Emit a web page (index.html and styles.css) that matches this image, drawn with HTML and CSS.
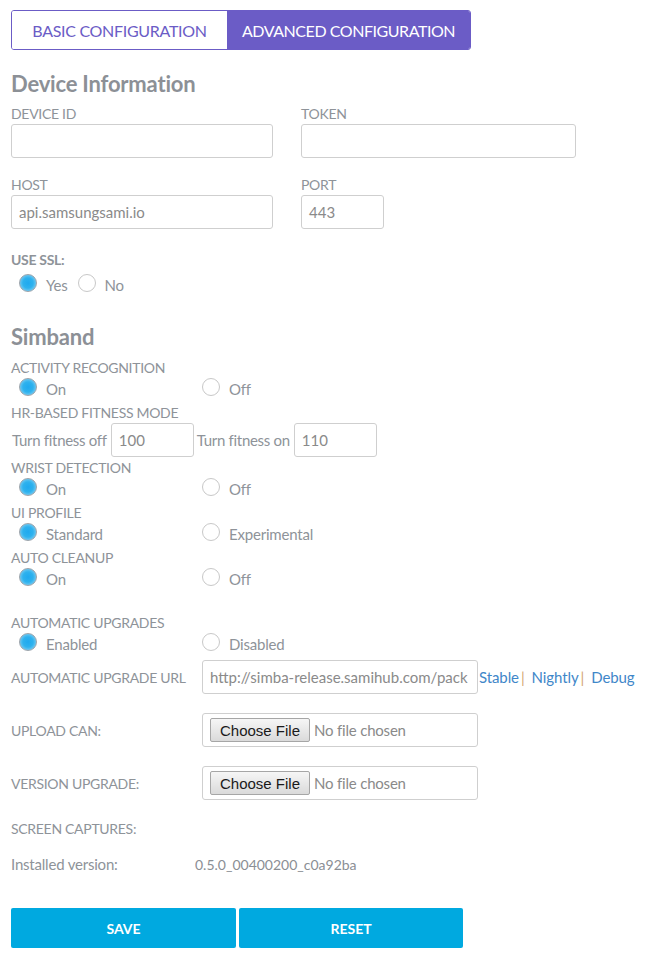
FILE: index.html
```html
<!DOCTYPE html>
<html>
<head>
<meta charset="utf-8">
<link rel="stylesheet" href="styles.css">
</head>
<body>
<div class="page">
  <div class="tabs">
    <div class="tab tab-basic">BASIC CONFIGURATION</div>
    <div class="tab tab-adv">ADVANCED CONFIGURATION</div>
  </div>

  <h2 class="section-title first">Device Information</h2>
  <div class="dev-grid">
    <div class="field">
      <div class="label">DEVICE ID</div>
      <div class="input input-wide"></div>
    </div>
    <div class="field">
      <div class="label">TOKEN</div>
      <div class="input input-token"></div>
    </div>
    <div class="field">
      <div class="label">HOST</div>
      <div class="input input-wide">api.samsungsami.io</div>
    </div>
    <div class="field">
      <div class="label">PORT</div>
      <div class="input input-port">443</div>
    </div>
  </div>

  <div class="label bold ssl-label">USE SSL:</div>
  <div class="ssl-row">
    <span class="radio checked"></span><span class="opt">Yes</span>
    <span class="radio"></span><span class="opt">No</span>
  </div>

  <h2 class="section-title simband">Simband</h2>

  <div class="label">ACTIVITY RECOGNITION</div>
  <div class="radio-row">
    <div class="choice"><span class="radio checked"></span><span class="opt">On</span></div>
    <div class="choice"><span class="radio"></span><span class="opt">Off</span></div>
  </div>

  <div class="label">HR-BASED FITNESS MODE</div>
  <div class="fitness-row">
    <span class="plain">Turn fitness off</span>
    <div class="input input-num">100</div>
    <span class="plain">Turn fitness on</span>
    <div class="input input-num">110</div>
  </div>

  <div class="label after-fitness">WRIST DETECTION</div>
  <div class="radio-row">
    <div class="choice"><span class="radio checked"></span><span class="opt">On</span></div>
    <div class="choice"><span class="radio"></span><span class="opt">Off</span></div>
  </div>

  <div class="label">UI PROFILE</div>
  <div class="radio-row">
    <div class="choice"><span class="radio checked"></span><span class="opt">Standard</span></div>
    <div class="choice"><span class="radio"></span><span class="opt">Experimental</span></div>
  </div>

  <div class="label">AUTO CLEANUP</div>
  <div class="radio-row">
    <div class="choice"><span class="radio checked"></span><span class="opt">On</span></div>
    <div class="choice"><span class="radio"></span><span class="opt">Off</span></div>
  </div>

  <div class="label spaced">AUTOMATIC UPGRADES</div>
  <div class="radio-row">
    <div class="choice"><span class="radio checked"></span><span class="opt">Enabled</span></div>
    <div class="choice"><span class="radio"></span><span class="opt">Disabled</span></div>
  </div>

  <div class="form-rows">
    <div class="form-row">
      <div class="row-label">AUTOMATIC UPGRADE URL</div>
      <div class="input input-url">http://simba-release.samihub.com/pack</div>
      <div class="links">
        <a class="link">Stable</a><span class="sep">|</span>
        <a class="link">Nightly</a><span class="sep">|</span>
        <a class="link">Debug</a>
      </div>
    </div>

    <div class="form-row">
      <div class="row-label">UPLOAD CAN:</div>
      <div class="input input-file">
        <span class="file-btn">Choose File</span><span class="file-none">No file chosen</span>
      </div>
    </div>

    <div class="form-row">
      <div class="row-label">VERSION UPGRADE:</div>
      <div class="input input-file">
        <span class="file-btn">Choose File</span><span class="file-none">No file chosen</span>
      </div>
    </div>
  </div>

  <div class="info-row captures">
    <div class="row-label">SCREEN CAPTURES:</div>
  </div>
  <div class="info-row installed">
    <div class="row-label plain-label">Installed version:</div>
    <div class="version">0.5.0_00400200_c0a92ba</div>
  </div>

  <div class="actions">
    <div class="btn btn-save">SAVE</div>
    <div class="btn btn-reset">RESET</div>
  </div>
</div>
</body>
</html>
```

FILE: styles.css
```css
* { box-sizing: border-box; }
html, body { margin: 0; padding: 0; background: #fff; }
body {
  font-family: Lato, "Noto Sans", sans-serif;
  color: #8e9399;
  font-size: 14px;
}
.page { padding: 10px 11px 0 11px; }

.tabs {
  display: inline-flex;
  height: 40px;
  border: 1px solid #6b5cc6;
  border-radius: 3px;
  overflow: hidden;
}
.tab {
  display: flex;
  align-items: center;
  justify-content: center;
  font-size: 16px;
  letter-spacing: -0.3px;
}
.tab-basic { width: 215px; color: #6b5cc6; background: #fff; }
.tab-adv { width: 243px; color: #fff; background: #6b5cc6; letter-spacing: -0.45px; }

.section-title {
  margin: 21px 0 0 0;
  font-size: 22px;
  font-weight: 700;
  color: #8c9096;
  line-height: 26px;
  letter-spacing: -0.2px;
}
.section-title.simband { margin-top: 28px; margin-bottom: 8px; }

.label {
  font-size: 14px;
  line-height: 20px;
  letter-spacing: -0.3px;
  color: #8e9399;
}
.label.bold { font-weight: 700; }

.dev-grid {
  display: grid;
  grid-template-columns: 290px 300px;
  row-gap: 17px;
  margin-top: 7px;
}

.input {
  height: 34px;
  border: 1px solid #cfcfcf;
  border-radius: 3px;
  padding: 0 7px;
  display: flex;
  align-items: center;
  font-size: 15px;
  color: #8a8a8a;
  background: #fff;
  overflow: hidden;
  white-space: nowrap;
}
.input-wide { width: 262px; }
.input-token { width: 275px; }
.input-port { width: 83px; }

.ssl-label { margin-top: 21px; }
.ssl-row {
  display: flex;
  align-items: center;
  padding-left: 8px;
  height: 26px;
}
.ssl-row .opt { margin-right: 10px; }

.radio {
  width: 18px;
  height: 18px;
  border-radius: 50%;
  border: 1px solid #c8c8c8;
  background: #fff;
  flex: none;
  margin-right: 9px;
}
.radio.checked {
  border-color: #9aa3ab;
  background: radial-gradient(circle at 50% 50%, #1fa9ef 0%, #2eb2ee 45%, #8ad1f3 85%, #cde9f6 100%);
}
.opt {
  font-size: 15px;
  color: #8e9399;
  position: relative;
  top: 2px;
  letter-spacing: -0.2px;
}

.radio-row {
  display: grid;
  grid-template-columns: 183px 200px;
  padding-left: 8px;
  height: 25px;
}
.choice { display: flex; align-items: center; height: 18px; }

.fitness-row {
  display: flex;
  align-items: center;
  height: 34px;
}
.plain { font-size: 15px; letter-spacing: -0.3px; color: #8e9399; padding: 0 3px 0 1px; }
.input-num { width: 83px; margin: 0 2px 0 1px; }

.after-fitness { margin-top: 1px; }
.spaced { margin-top: 20px; }

.form-rows {
  display: flex;
  flex-direction: column;
  gap: 19px;
  margin-top: 2px;
}
.form-row {
  display: flex;
  align-items: center;
}
.row-label {
  width: 191px;
  flex: none;
  font-size: 14px;
  letter-spacing: -0.3px;
  color: #8e9399;
}
.plain-label { font-size: 15px; letter-spacing: -0.2px; width: 184px; }
.input-url { width: 276px; padding: 0 7px; }
.links { display: flex; align-items: center; padding-left: 1px; font-size: 15px; letter-spacing: -0.1px; }
.link { color: #3f87c9; }
.sep { color: #d4a673; margin: 0 7px 0 2px; }

.input-file { width: 276px; padding: 0 7px; }
.file-btn {
  font-family: "Liberation Sans", Arial, sans-serif;
  font-size: 15px;
  color: #1a1a1a;
  height: 24px;
  padding: 0 9px 0 9px;
  display: flex;
  align-items: center;
  border: 1px solid #a6a6a6;
  border-radius: 2px;
  background: linear-gradient(#f6f6f6, #dadada);
  margin-right: 4px;
}
.file-none { color: #8a8a8a; font-size: 15px; letter-spacing: -0.2px; }

.info-row {
  display: flex;
  align-items: center;
  height: 20px;
}
.captures { margin-top: 18px; }
.installed { margin-top: 16px; }
.version { font-size: 14px; color: #8a8e94; letter-spacing: 0; }

.actions {
  display: flex;
  gap: 3px;
  margin-top: 34px;
}
.btn {
  height: 40px;
  background: #00a9e0;
  color: #fff;
  font-weight: 700;
  font-size: 14px;
  display: flex;
  align-items: center;
  justify-content: center;
  border-radius: 2px;
}
.btn-save { width: 225px; }
.btn-reset { width: 224px; }
```
